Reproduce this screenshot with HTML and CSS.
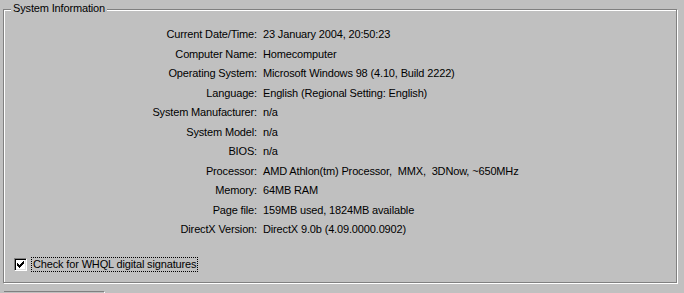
FILE: index.html
```html
<!DOCTYPE html>
<html lang="en">
<head>
  <meta charset="UTF-8" />
  <title>DirectX Diagnostic Tool - System</title>
  <link rel="stylesheet" href="styles.css">
</head>
<body>
  <div class="groupbox">
    <span class="legend">System Information</span>

    <div class="info">
      <span class="label">Current Date/Time:</span><span class="value">23 January 2004, 20:50:23</span>
      <span class="label">Computer Name:</span><span class="value">Homecomputer</span>
      <span class="label">Operating System:</span><span class="value">Microsoft Windows 98 (4.10, Build 2222)</span>
      <span class="label">Language:</span><span class="value">English (Regional Setting: English)</span>
      <span class="label">System Manufacturer:</span><span class="value">n/a</span>
      <span class="label">System Model:</span><span class="value">n/a</span>
      <span class="label">BIOS:</span><span class="value">n/a</span>
      <span class="label">Processor:</span><span class="value">AMD Athlon(tm) Processor,&nbsp; MMX,&nbsp; 3DNow, ~650MHz</span>
      <span class="label">Memory:</span><span class="value">64MB RAM</span>
      <span class="label">Page file:</span><span class="value">159MB used, 1824MB available</span>
      <span class="label">DirectX Version:</span><span class="value">DirectX 9.0b (4.09.0000.0902)</span>
    </div>

    <label class="check">
      <span class="check-box">
        <svg width="7" height="7" viewBox="0 0 7 7" shape-rendering="crispEdges">
          <path d="M0 2h1v3h-1z M1 3h1v3h-1z M2 4h1v3h-1z M3 3h1v3h-1z M4 2h1v3h-1z M5 1h1v3h-1z M6 0h1v3h-1z" fill="#000"/>
        </svg>
      </span>
      <span class="check-text">Check for WHQL digital signatures</span>
    </label>
  </div>

  <div class="below"></div>
</body>
</html>
```

FILE: styles.css
```css
* {
  box-sizing: border-box;
  margin: 0;
  padding: 0;
}

body {
  background: #c0c0c0;
  color: #000;
  font-family: 'Liberation Sans', Arial, sans-serif;
  font-size: 11px;
  letter-spacing: -0.15px;
  overflow: hidden;
}

.groupbox {
  position: relative;
  margin: 9px 0 0 3px;
  width: 674px;
  height: 274px;
  border: 1px solid #808080;
  box-shadow: inset 1px 1px #fff, 1px 1px #fff;
  padding-top: 15px;
}

.legend {
  position: absolute;
  top: -8px;
  left: 7px;
  padding: 0 2px;
  line-height: 13px;
  background: #c0c0c0;
}

.info {
  display: grid;
  grid-template-columns: 253px auto;
  column-gap: 6px;
  line-height: 19.5px;
  white-space: nowrap;
}

.info .label {
  text-align: right;
}

.check {
  display: flex;
  align-items: center;
  margin: 17px 0 0 10px;
  height: 15px;
}

.check-box {
  display: flex;
  align-items: center;
  justify-content: center;
  width: 13px;
  height: 13px;
  background: #fff;
  border: 1px solid;
  border-color: #808080 #fff #fff #808080;
  box-shadow: inset 1px 1px #000, inset -1px -1px #dfdfdf;
}

.check-text {
  margin-left: 4px;
  padding: 0 1px;
  height: 15px;
  line-height: 13px;
  border: 1px dotted #000;
}

.below {
  margin: 8px 0 0 4px;
  width: 101px;
  height: 2px;
  border-top: 1px solid #808080;
  border-right: 1px solid #fff;
}
```
